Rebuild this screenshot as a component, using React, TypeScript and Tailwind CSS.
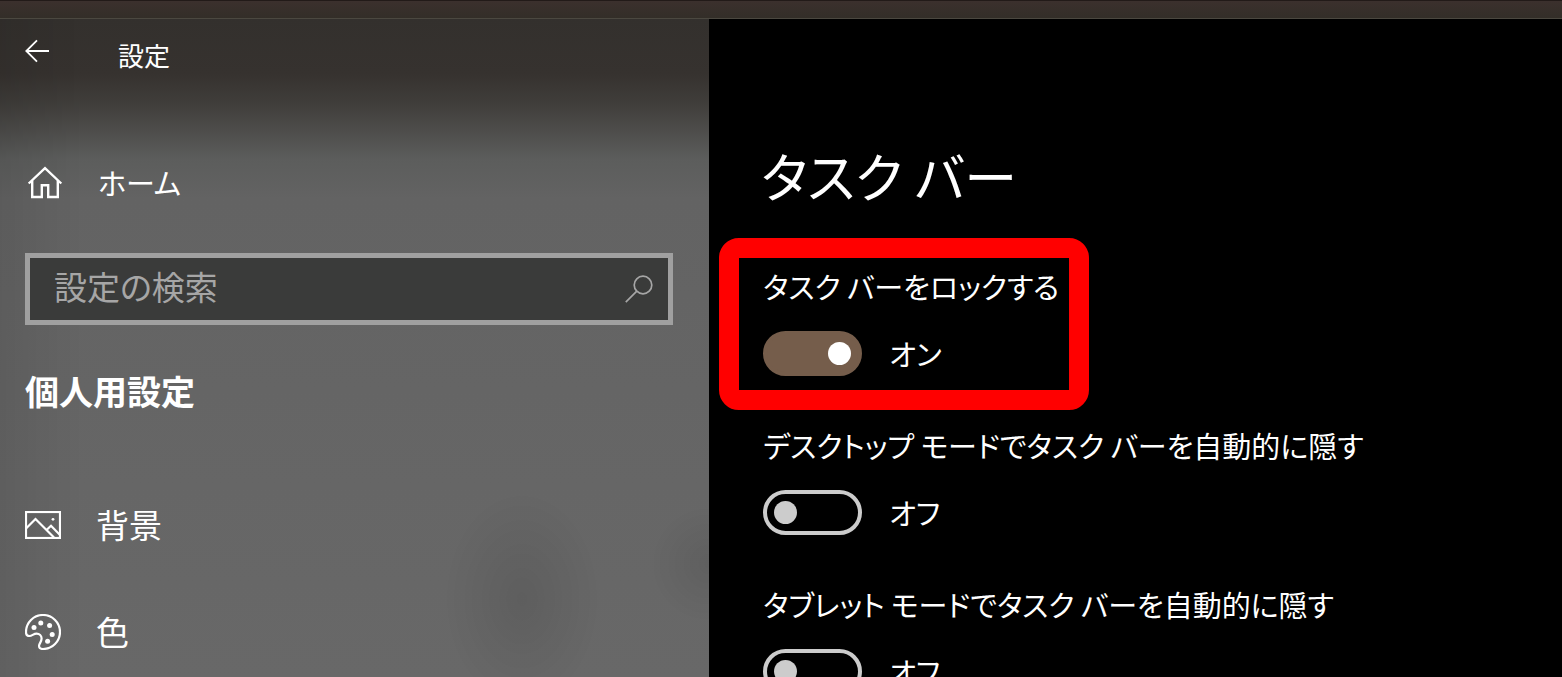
import { useState } from 'react'

const navItems = [
  { label: '背景', icon: <PictureIcon /> },
  { label: '色', icon: <PaletteIcon /> },
]

function BackIcon() {
  return (
    <svg width="26" height="24" viewBox="0 0 26 24" fill="none" stroke="currentColor" strokeWidth="1.8">
      <path d="M1.5 12H24M12 1.3L1.3 12L12 22.7" />
    </svg>
  )
}

function HomeIcon() {
  return (
    <svg width="38" height="34" viewBox="0 0 38 34" fill="none" stroke="currentColor" strokeWidth="2.4">
      <path d="M3.7 17.5L20 2.2L36.3 17.5" />
      <path d="M7.2 14.5V31H16.8V19.2H23.2V31H32.8V14.5" />
    </svg>
  )
}

function SearchIcon() {
  return (
    <svg width="28" height="28" viewBox="0 0 28 28" fill="none" stroke="currentColor" strokeWidth="1.7">
      <circle cx="18" cy="10" r="8.8" />
      <path d="M11.8 16.2L0.8 27.2" />
    </svg>
  )
}

function PictureIcon() {
  return (
    <svg width="36" height="28" viewBox="0 0 36 28" fill="none" stroke="currentColor" strokeWidth="2.2">
      <rect x="1" y="1" width="34" height="26" />
      <path d="M1 17.5L10.5 8L29 26.5" />
      <path d="M21.5 19L26 14.8L35 24" />
      <circle cx="28" cy="8.3" r="1.4" fill="currentColor" stroke="none" />
    </svg>
  )
}

function PaletteIcon() {
  return (
    <svg width="36" height="36" viewBox="0 0 36 36" fill="none" stroke="currentColor" strokeWidth="2.2">
      <path d="M1 18C1 8.6 8.6 1 18 1S35 8.6 35 18S27.4 35 18 35C15 35 13.6 33.4 14.2 31C14.8 28.8 16.6 27.4 16.6 24.6C16.6 21.6 14.4 19.6 11.6 19.6C8.6 19.6 7 22 4.6 22C2 22 1 20.4 1 18Z" />
      <g fill="currentColor" stroke="none">
        <circle cx="9" cy="13.4" r="2.5" />
        <circle cx="15.8" cy="9" r="2.5" />
        <circle cx="24.6" cy="11.4" r="2.5" />
        <circle cx="27.2" cy="20.4" r="2.5" />
        <circle cx="22.6" cy="27.2" r="2.5" />
      </g>
    </svg>
  )
}

function Toggle({ id, label, defaultOn = false, highlighted = false }: {
  id: string
  label: string
  defaultOn?: boolean
  highlighted?: boolean
}) {
  const [on, setOn] = useState(defaultOn)

  return (
    <div className="relative">
      <label htmlFor={id} className="block text-[29px] leading-[46px] whitespace-nowrap">{label}</label>
      <div className="mt-[22px] flex items-center gap-[27px]">
        <input
          id={id}
          type="checkbox"
          role="switch"
          checked={on}
          onChange={(e) => setOn(e.target.checked)}
          className="flex h-[45px] w-[99px] shrink-0 appearance-none items-center rounded-full border-4 border-[#cccccc] px-[7px] before:size-[23px] before:rounded-full before:bg-[#cccccc] checked:justify-end checked:border-[#755d4b] checked:bg-[#755d4b] checked:before:bg-white"
        />
        <span className="text-[29px] leading-[45px]">{on ? 'オン' : 'オフ'}</span>
      </div>
      {highlighted && (
        <div className="pointer-events-none absolute -top-[25px] -left-11 h-[172px] w-[370px] rounded-[20px] border-[20px] border-[#ff0000]" />
      )}
    </div>
  )
}

export default function App() {
  return (
    <div
      lang="ja"
      className="flex h-screen flex-col overflow-hidden bg-black font-['Noto_Sans_CJK_JP',sans-serif] text-white [font-feature-settings:'palt']"
    >
      <div className="h-[19px] shrink-0 border-t border-b border-t-[#221a18] border-b-[#4b4840] bg-linear-to-b from-[#3b302d] to-[#332e28]" />
      <div className="flex min-h-0 flex-1">
        <aside className="w-[45.4%] shrink-0 bg-[radial-gradient(ellipse_80px_110px_at_522px_580px,rgba(0,0,0,0.09),transparent),radial-gradient(ellipse_60px_60px_at_709px_545px,rgba(0,0,0,0.08),transparent),linear-gradient(to_right,rgba(0,0,0,0.08),transparent_12%),linear-gradient(to_bottom,#33302d_0px,#36322f_55px,#403e3b_85px,#4e4d4b_112px,#5c5d5c_140px,#636363_180px,#686868_100%)] pt-5 pr-9 pl-[25px]">
          <header className="flex items-start gap-[67px]">
            <button type="button" aria-label="戻る">
              <BackIcon />
            </button>
            <span className="text-[26px] leading-8">設定</span>
          </header>

          <a href="#home" className="mt-[88px] flex h-12 items-center gap-[35px] text-[29px]">
            <HomeIcon />
            ホーム
          </a>

          <div className="mt-[46px] flex h-[72px] items-center border-[5px] border-[#a0a0a0] bg-[#3a3b3a] pr-[15px] pl-6 text-[#a6a6a6]">
            <input
              type="text"
              aria-label="設定の検索"
              placeholder="設定の検索"
              className="h-[46px] min-w-0 flex-1 bg-transparent pb-1 text-[33px] outline-none placeholder:text-[#a6a6a6]"
            />
            <button type="button" aria-label="検索">
              <SearchIcon />
            </button>
          </div>

          <h2 className="mt-11 text-[34px] leading-11 font-bold">個人用設定</h2>

          <nav className="mt-[88px] flex flex-col gap-[59px]">
            {navItems.map((item) => (
              <a key={item.label} href="#" className="flex h-12 items-center gap-[35px] text-[33px]">
                {item.icon}
                {item.label}
              </a>
            ))}
          </nav>
        </aside>

        <main className="min-w-0 flex-1 pt-[114px] pl-[52px]">
          <h1 className="text-[53px] leading-[84px]">タスク バー</h1>
          <div className="mt-[46px] ml-0.5 flex flex-col items-start gap-[46px]">
            <Toggle id="lock" label="タスク バーをロックする" defaultOn highlighted />
            <Toggle id="hide-desktop" label="デスクトップ モードでタスク バーを自動的に隠す" />
            <Toggle id="hide-tablet" label="タブレット モードでタスク バーを自動的に隠す" />
          </div>
        </main>
      </div>
    </div>
  )
}
